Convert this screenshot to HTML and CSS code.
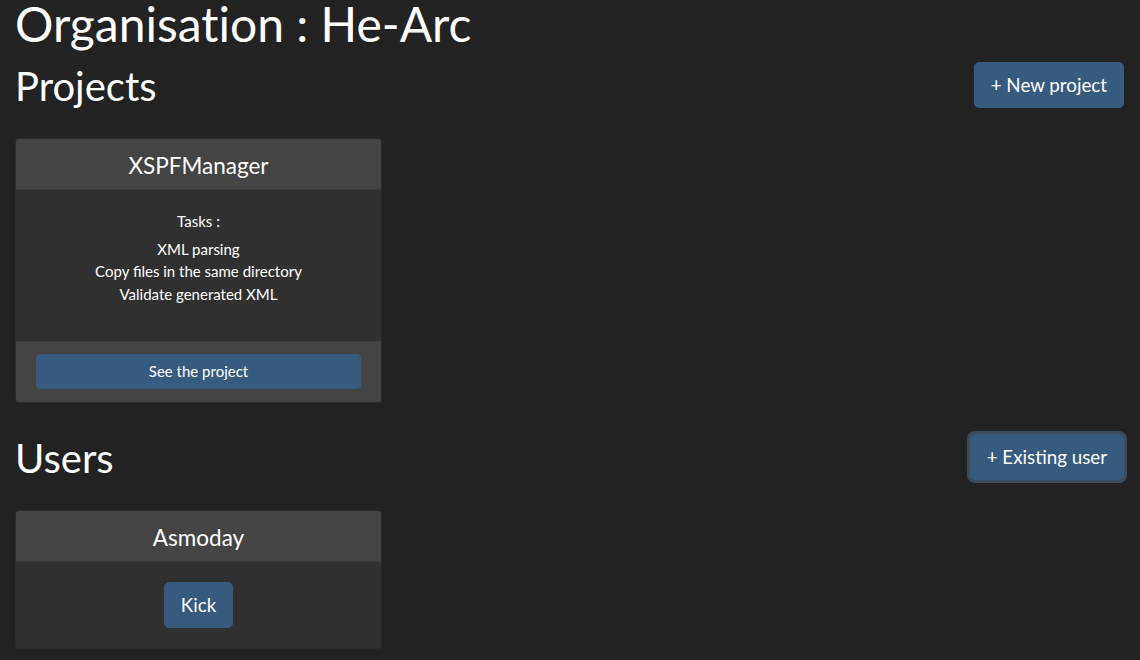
FILE: index.html
```html
<!DOCTYPE html>
<html lang="en">
<head>
<meta charset="utf-8">
<title>Organisation : He-Arc</title>
<link rel="stylesheet" href="styles.css">
</head>
<body>
<main class="page">
  <h1 class="title">Organisation : He-Arc</h1>

  <section class="section">
    <div class="section-head">
      <h2 class="section-title">Projects</h2>
      <button class="btn btn-lg">+ New project</button>
    </div>
    <div class="card">
      <div class="card-header"><h4 class="card-title">XSPFManager</h4></div>
      <div class="card-body">
        <p class="tasks-label">Tasks :</p>
        <ul class="task-list">
          <li>XML parsing</li>
          <li>Copy files in the same directory</li>
          <li>Validate generated XML</li>
        </ul>
      </div>
      <div class="card-footer">
        <button class="btn btn-block">See the project</button>
      </div>
    </div>
  </section>

  <section class="section">
    <div class="section-head">
      <h2 class="section-title">Users</h2>
      <button class="btn btn-lg btn-focus">+ Existing user</button>
    </div>
    <div class="card">
      <div class="card-header"><h4 class="card-title">Asmoday</h4></div>
      <div class="card-body">
        <button class="btn btn-lg">Kick</button>
      </div>
    </div>
  </section>
</main>
</body>
</html>
```

FILE: styles.css
```css
* { box-sizing: border-box; }

html, body {
  margin: 0;
  background: #222222;
}

body {
  font-family: Lato, "Open Sans", sans-serif;
  font-size: 15px;
  line-height: 1.5;
  color: #ffffff;
}

.page {
  padding: 0 16px 0 15px;
}

.title {
  font-size: 48px;
  font-weight: 400;
  line-height: 48px;
  margin: 0 0 13px;
  font-variant-ligatures: none;
  font-feature-settings: "liga" 0, "dlig" 0, "calt" 0;
}

.section {
  display: flex;
  flex-direction: column;
  align-items: flex-start;
  margin-bottom: 30px;
}

.section-head {
  align-self: stretch;
  display: flex;
  justify-content: space-between;
  align-items: center;
  margin-bottom: 29px;
}

.section-title {
  font-size: 40px;
  font-weight: 400;
  line-height: 45px;
  padding-top: 3px;
  margin: 0;
}

.btn {
  font-family: inherit;
  font-size: 15px;
  line-height: 1.5;
  color: #ffffff;
  background: #375a7f;
  border: 1px solid #375a7f;
  border-radius: 4px;
  padding: 6px 12px;
  cursor: pointer;
  text-align: center;
}

.btn-lg {
  font-size: 18.75px;
  padding: 8px 16px;
  border-radius: 5px;
}

.btn-focus {
  box-shadow: 0 0 0 3px rgba(85, 115, 146, 0.5);
}

.btn-block {
  display: block;
  width: 100%;
  line-height: 21px;
}

.card {
  width: 367px;
  background: #303030;
  border: 1px solid rgba(0, 0, 0, 0.125);
  border-radius: 4px;
  overflow: hidden;
  text-align: center;
}

.card-header {
  background: #444444;
  padding: 14px 20px 11px;
  border-bottom: 1px solid rgba(0, 0, 0, 0.125);
}

.card-title {
  font-size: 22.5px;
  font-weight: 400;
  line-height: 25px;
  margin: 0;
}

.card-body {
  padding: 20px;
}

.tasks-label {
  margin: 0 0 5px;
}

.task-list {
  list-style: none;
  margin: 0 0 16px;
  padding: 0;
}

.card-footer {
  background: #444444;
  padding: 12px 20px 13px;
  border-top: 1px solid rgba(0, 0, 0, 0.125);
}
```
